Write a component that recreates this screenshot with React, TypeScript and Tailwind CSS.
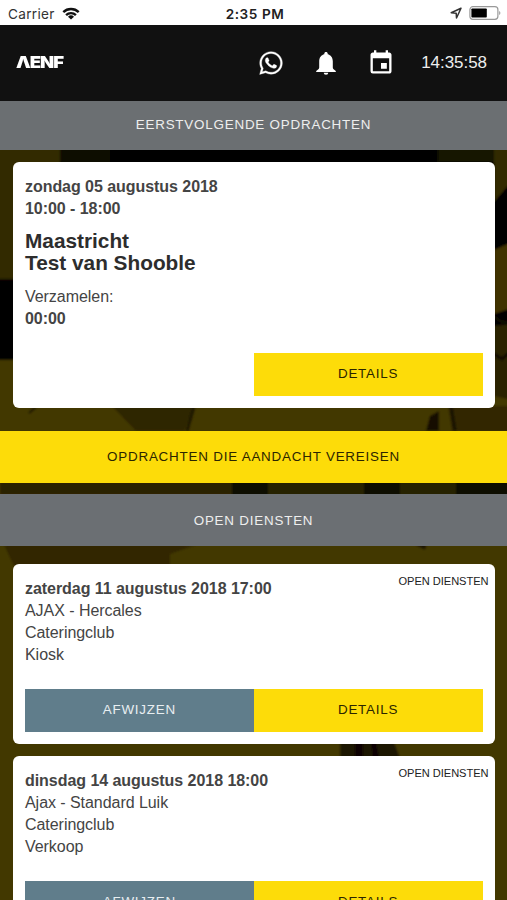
import { MdEvent } from "react-icons/md";
import { FaWhatsapp } from "react-icons/fa";

const openShifts = [
  { date: "zaterdag 11 augustus 2018 17:00", title: "AJAX - Hercales", client: "Cateringclub", role: "Kiosk" },
  { date: "dinsdag 14 augustus 2018 18:00", title: "Ajax - Standard Luik", client: "Cateringclub", role: "Verkoop" },
];

function StatusBar() {
  return (
    <div className="flex h-[25px] items-center bg-white pl-2 pr-[5px] pt-0.5 font-['Inter',sans-serif] text-[13px] text-[#222]">
      <div className="flex flex-1 items-center gap-[7px]">
        <span className="text-[13.6px] tracking-[0.3px] text-[#333]">Carrier</span>
        <svg viewBox="0 0 18 13" className="h-[13px] w-[18px]" fill="none" stroke="#111" strokeWidth="2.4">
          <path d="M1.3 5.1a11 11 0 0 1 15.4 0" />
          <path d="M4.1 8.1a7 7 0 0 1 9.8 0" />
          <path d="M9 12.6 6 9.8a4.3 4.3 0 0 1 6 0Z" fill="#111" stroke="none" />
        </svg>
      </div>
      <span className="text-[13.6px] font-semibold tracking-[0.55px]">2:35 PM</span>
      <div className="flex flex-1 items-center justify-end gap-2">
        <svg viewBox="0 0 12 12" className="h-3 w-3 -translate-y-px" fill="none" stroke="#333" strokeWidth="1.5" strokeLinejoin="round">
          <path d="M11 1.2 1.2 5.8l5 .4.3 4.8Z" />
        </svg>
        <svg viewBox="0 0 32 14" className="h-3.5 w-8 -translate-x-px -translate-y-px">
          <rect x="0.9" y="0.7" width="28" height="12.6" rx="3" fill="#fff" stroke="#999" strokeWidth="1.2" />
          <rect x="2.4" y="2.4" width="15.4" height="9.2" rx="0.8" fill="#000" />
          <path d="M30.2 5a2.3 2.3 0 0 1 0 4Z" fill="#999" />
        </svg>
      </div>
    </div>
  );
}

function BellIcon({ className }: { className: string }) {
  return (
    <svg viewBox="0 0 20 23" className={className} fill="currentColor">
      <path d="M10 0c-1 0-1.7.7-1.7 1.6v.7C5.2 3 3.2 5.7 3.2 9.2v6.3c0 1.4-1.2 2.3-3 3.4v1h19.6v-1c-1.8-1.1-3-2-3-3.4V9.2c0-3.5-2-6.2-5.1-6.9v-.7C11.7.7 11 0 10 0Z" />
      <path d="M7.7 20.7h4.6a2.3 2.1 0 0 1-4.6 0Z" />
    </svg>
  );
}

function Header() {
  return (
    <header className="flex h-19 items-center bg-[#111] pl-4 pr-5 text-white">
      <span className="-mt-px origin-left scale-x-[1.12] font-['Inter',sans-serif] text-[16.5px] leading-none font-black tracking-[-0.9px]">
        ΛENF
      </span>
      <div className="ml-auto flex items-center">
        <FaWhatsapp className="mr-[32px] h-[26px] w-[26px]" stroke="currentColor" strokeWidth="6" />
        <BellIcon className="mr-[31px] h-[23px] w-5" />
        <MdEvent className="mr-[26px] h-7 w-7" />
        <span className="text-[17px] text-[#eee]">14:35:58</span>
      </div>
    </header>
  );
}

function Backdrop() {
  return (
    <svg viewBox="0 0 507 750" preserveAspectRatio="none" className="absolute inset-x-0 top-[150px] -z-10 h-[750px] w-full">
      <defs>
        <filter id="soft" x="0" y="0" width="100%" height="100%">
          <feGaussianBlur stdDeviation="1.2" />
        </filter>
      </defs>
      <rect width="507" height="750" fill="#433800" />
      <g filter="url(#soft)">
        <path d="M-5-5h517v760H-5Z" fill="#433800" />
        <path d="M-5-5h517v205l-18 10H-5Z" fill="#000" />
        <path d="M-5-5h65v17l-46 117H-5Z" fill="#332900" />
        <path d="M60-5h50v17H60Z" fill="#0b0900" />
        <path d="M438-5h56v17h-56Z" fill="#161500" />
        <path d="M494-5h18v36l-18 21Z" fill="#332900" />
        <path d="M512 92v66l-18 6v-64Z" fill="#3f3300" />
        <path d="M512 174v90h-18v-88Z" fill="#2a2300" />
        <path d="M494 166c6 7 12 7 18 5M494 204l8 5 10-9" stroke="#0d0a00" strokeWidth="3" fill="none" />
        <path d="M-5 220l19-6v32h480l18 4v105H-5Z" fill="#423700" />
        <path d="M112 256h82l-10 25h-48Z" fill="#2e2600" />
        <path d="M194 257l-7 24" stroke="#1c1600" strokeWidth="3" />
        <path d="M29 263l7-6" stroke="#181200" strokeWidth="2" />
        <path d="M426 281l4-15 9-5v20Z" fill="#161000" />
        <path d="M448 256h64v25h-60Z" fill="#302700" />
        <path d="M451 256l4 25" stroke="#171100" strokeWidth="3" />
        <path d="M0 332h232v13H0Z" fill="#2c2200" />
        <path d="M232 330h36v18h-36ZM364 330h36v18h-36ZM456 330h56v18h-56Z" fill="#090700" />
        <path d="M268 330h96v18h-96ZM400 330h56v18h-56Z" fill="#272000" />
        <path d="M4 395h192l-26 9v12H14Z" fill="#302700" />
        <path d="M414 394h13l-2 6Z" fill="#1b1500" />
        <path d="M340 592h54l6 16h-60Z" fill="#1d1800" />
        <path d="M355 592h8v16h-8ZM371 592h5l3 16h-6Z" fill="#080600" />
      </g>
    </svg>
  );
}

function SectionTitle({ children, className }: { children: string; className: string }) {
  return (
    <h2 className={`flex items-center justify-center text-[13.4px] leading-none tracking-[0.79px] ${className}`}>
      {children}
    </h2>
  );
}

const buttonClass = "h-[43px] w-1/2 pb-px text-[13.4px] tracking-[0.79px]";

export default function App() {
  return (
    <div className="relative isolate h-[900px] w-[507px] overflow-hidden font-['Liberation_Sans',Arial,sans-serif] text-base leading-[22px] tracking-[-0.05px] text-[#444]">
      <Backdrop />
      <StatusBar />
      <Header />

      <SectionTitle className="h-[49px] bg-[#6b6f72] pb-0.5 text-[#eee]">EERSTVOLGENDE OPDRACHTEN</SectionTitle>

      <section className="mt-3 mr-[12.5px] mb-[23px] ml-[13px] h-[246px] rounded-md bg-white px-3 pt-3.5">
        <div className="font-bold">
          <p>zondag 05 augustus 2018</p>
          <p>10:00 - 18:00</p>
        </div>
        <h3 className="mt-2.5 mb-3 text-[20.8px] leading-[22px] font-bold tracking-normal text-[#2d2d2d]">
          Maastricht
          <br />
          Test van Shooble
        </h3>
        <p>Verzamelen:</p>
        <p className="font-bold">00:00</p>
        <div className="mt-[22.5px] flex justify-end">
          <button className={`${buttonClass} bg-[#fddc09] text-[#2b2500]`}>DETAILS</button>
        </div>
      </section>

      <SectionTitle className="h-[52px] bg-[#fddc09] text-[#2b2500]">OPDRACHTEN DIE AANDACHT VEREISEN</SectionTitle>
      <SectionTitle className="mt-[11px] h-[52px] bg-[#6b6f73] pt-px text-[#eee]">OPEN DIENSTEN</SectionTitle>

      <div className="mt-[18px] mr-[12.5px] ml-[13px] flex flex-col gap-3">
        {openShifts.map((shift) => (
          <section key={shift.date} className="relative h-[180px] rounded-md bg-white px-3 pt-[13.5px]">
            <span className="absolute top-1.5 right-1.5 text-[11.1px] text-[#222]">OPEN DIENSTEN</span>
            <p className="font-bold">{shift.date}</p>
            <p>{shift.title}</p>
            <p>{shift.client}</p>
            <p>{shift.role}</p>
            <div className="mt-[23px] flex">
              <button className={`${buttonClass} bg-[#607d8b] text-[#e8eef1]`}>AFWIJZEN</button>
              <button className={`${buttonClass} bg-[#fddc09] text-[#2b2500]`}>DETAILS</button>
            </div>
          </section>
        ))}
      </div>
    </div>
  );
}
